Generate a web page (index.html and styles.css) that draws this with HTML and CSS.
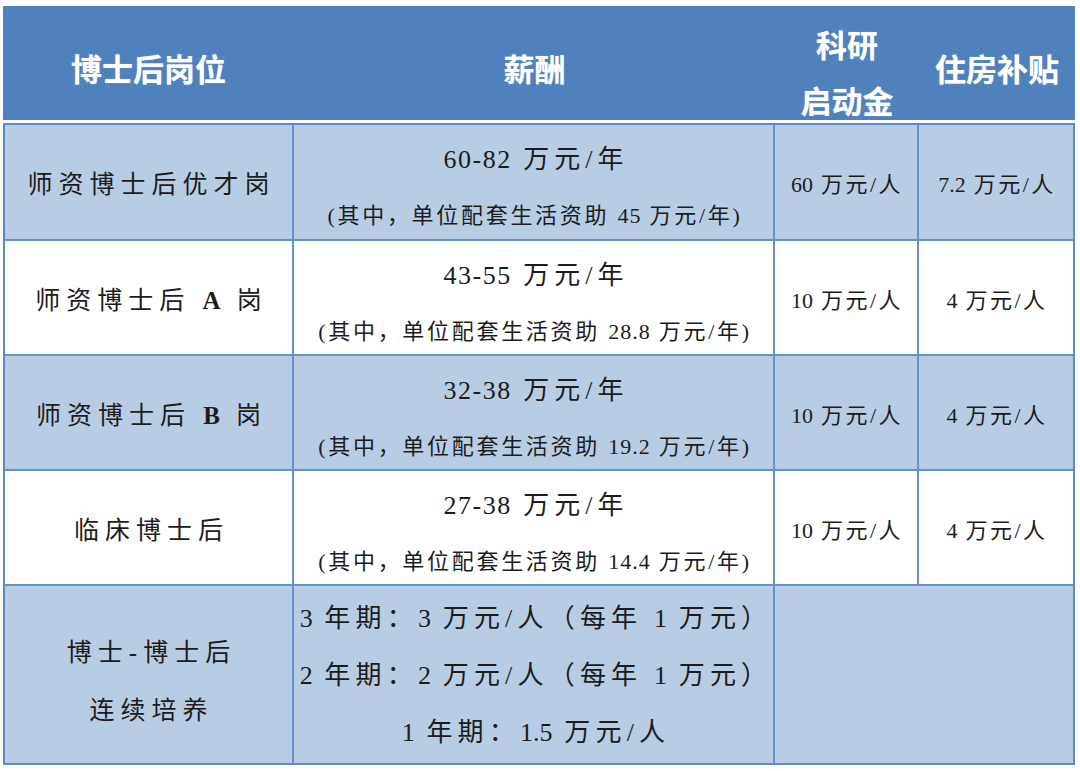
FILE: index.html
```html
<!DOCTYPE html>
<html lang="zh-CN">
<head>
<meta charset="utf-8">
<title>博士后岗位待遇</title>
<link rel="stylesheet" href="styles.css">
</head>
<body>
<div class="sheet">
  <div class="head">
    <div class="hcell">博士后岗位</div>
    <div class="hcell">薪酬</div>
    <div class="hcell two"><span>科研</span><span>启动金</span></div>
    <div class="hcell">住房补贴</div>
  </div>
  <div class="grid">
    <div class="cell tint name"><span>师资博士后优才岗</span></div>
    <div class="cell tint pay"><span class="main"><span class="n">60-82</span> 万元/年</span><span class="sub">(其中，单位配套生活资助 <span class="n">45</span> 万元/年)</span></div>
    <div class="cell tint val"><span><span class="n">60</span> 万元/人</span></div>
    <div class="cell tint val last"><span><span class="n">7.2</span> 万元/人</span></div>

    <div class="cell name"><span>师资博士后 <b>A</b> 岗</span></div>
    <div class="cell pay"><span class="main"><span class="n">43-55</span> 万元/年</span><span class="sub">(其中，单位配套生活资助 <span class="n">28.8</span> 万元/年)</span></div>
    <div class="cell val"><span><span class="n">10</span> 万元/人</span></div>
    <div class="cell val last"><span><span class="n">4</span> 万元/人</span></div>

    <div class="cell tint name"><span>师资博士后 <b>B</b> 岗</span></div>
    <div class="cell tint pay"><span class="main"><span class="n">32-38</span> 万元/年</span><span class="sub">(其中，单位配套生活资助 <span class="n">19.2</span> 万元/年)</span></div>
    <div class="cell tint val"><span><span class="n">10</span> 万元/人</span></div>
    <div class="cell tint val last"><span><span class="n">4</span> 万元/人</span></div>

    <div class="cell name"><span>临床博士后</span></div>
    <div class="cell pay"><span class="main"><span class="n">27-38</span> 万元/年</span><span class="sub">(其中，单位配套生活资助 <span class="n">14.4</span> 万元/年)</span></div>
    <div class="cell val"><span><span class="n">10</span> 万元/人</span></div>
    <div class="cell val last"><span><span class="n">4</span> 万元/人</span></div>

    <div class="cell tint name stack bottom"><span>博士-博士后</span><span>连续培养</span></div>
    <div class="cell tint plan bottom"><span><span class="n">3</span> 年期：<span class="n">3</span> 万元/人（每年 <span class="n">1</span> 万元）</span><span><span class="n">2</span> 年期：<span class="n">2</span> 万元/人（每年 <span class="n">1</span> 万元）</span><span><span class="n">1</span> 年期：<span class="n">1.5</span> 万元/人</span></div>
    <div class="cell tint span2 last bottom"></div>
  </div>
</div>
</body>
</html>
```

FILE: styles.css
```css
* { box-sizing: border-box; }

body {
  margin: 0;
  background: #ffffff;
  font-family: "Liberation Serif", "Noto Sans CJK SC", serif;
  color: #1c1c1c;
}

.sheet {
  width: 1072px;
  margin: 6px 0 0 3px;
}

.head {
  display: grid;
  grid-template-columns: 291px 481px 144px 156px;
  height: 114px;
  background: #4f81bd;
  margin-bottom: 3px;
}

.hcell {
  display: flex;
  align-items: center;
  justify-content: center;
  font-family: "Noto Sans CJK SC", sans-serif;
  font-weight: 700;
  font-size: 31px;
  color: #ffffff;
  text-shadow: 0 0 1px rgba(255, 255, 255, 0.6);
}

.hcell.two {
  display: block;
  text-align: center;
  line-height: 56px;
  padding-top: 10px;
}

.hcell.two span { display: block; }

.grid {
  display: grid;
  grid-template-columns: 289px 481px 144px 154px;
  grid-template-rows: 116px 115px 115px 115px 177px;
  border: 2px solid #5b8acb;
}

.cell {
  display: flex;
  flex-direction: column;
  align-items: center;
  justify-content: center;
  border-right: 2px solid #6492cf;
  border-bottom: 2px solid #6492cf;
  background: #ffffff;
  white-space: nowrap;
}

.cell.tint { background: #b8cce4; }
.cell.last { border-right: 0; }
.cell.bottom { border-bottom: 0; }
.cell.span2 { grid-column: span 2; }

.n { letter-spacing: 1px; }

.name {
  font-size: 25px;
  letter-spacing: 6px;
  padding-left: 6px;
}

.name b { font-weight: 700; letter-spacing: 4px; }

.name.stack {
  line-height: 58px;
  padding-top: 14px;
}

.pay {
  line-height: 56px;
  padding-top: 12px;
}

.pay .main {
  font-size: 26px;
  letter-spacing: 5px;
  padding-left: 5px;
}

.pay .main .n { letter-spacing: 1.5px; }

.pay .sub {
  font-size: 22px;
  letter-spacing: 2.7px;
  padding-left: 3px;
}

.plan {
  font-size: 26px;
  letter-spacing: 5.2px;
  line-height: 57px;
  padding-top: 2px;
  padding-left: 5px;
}

.plan .n { letter-spacing: 0; }

.val {
  font-size: 22px;
  letter-spacing: 2.5px;
  padding-left: 2px;
}

.val .n { letter-spacing: 0; }
```
